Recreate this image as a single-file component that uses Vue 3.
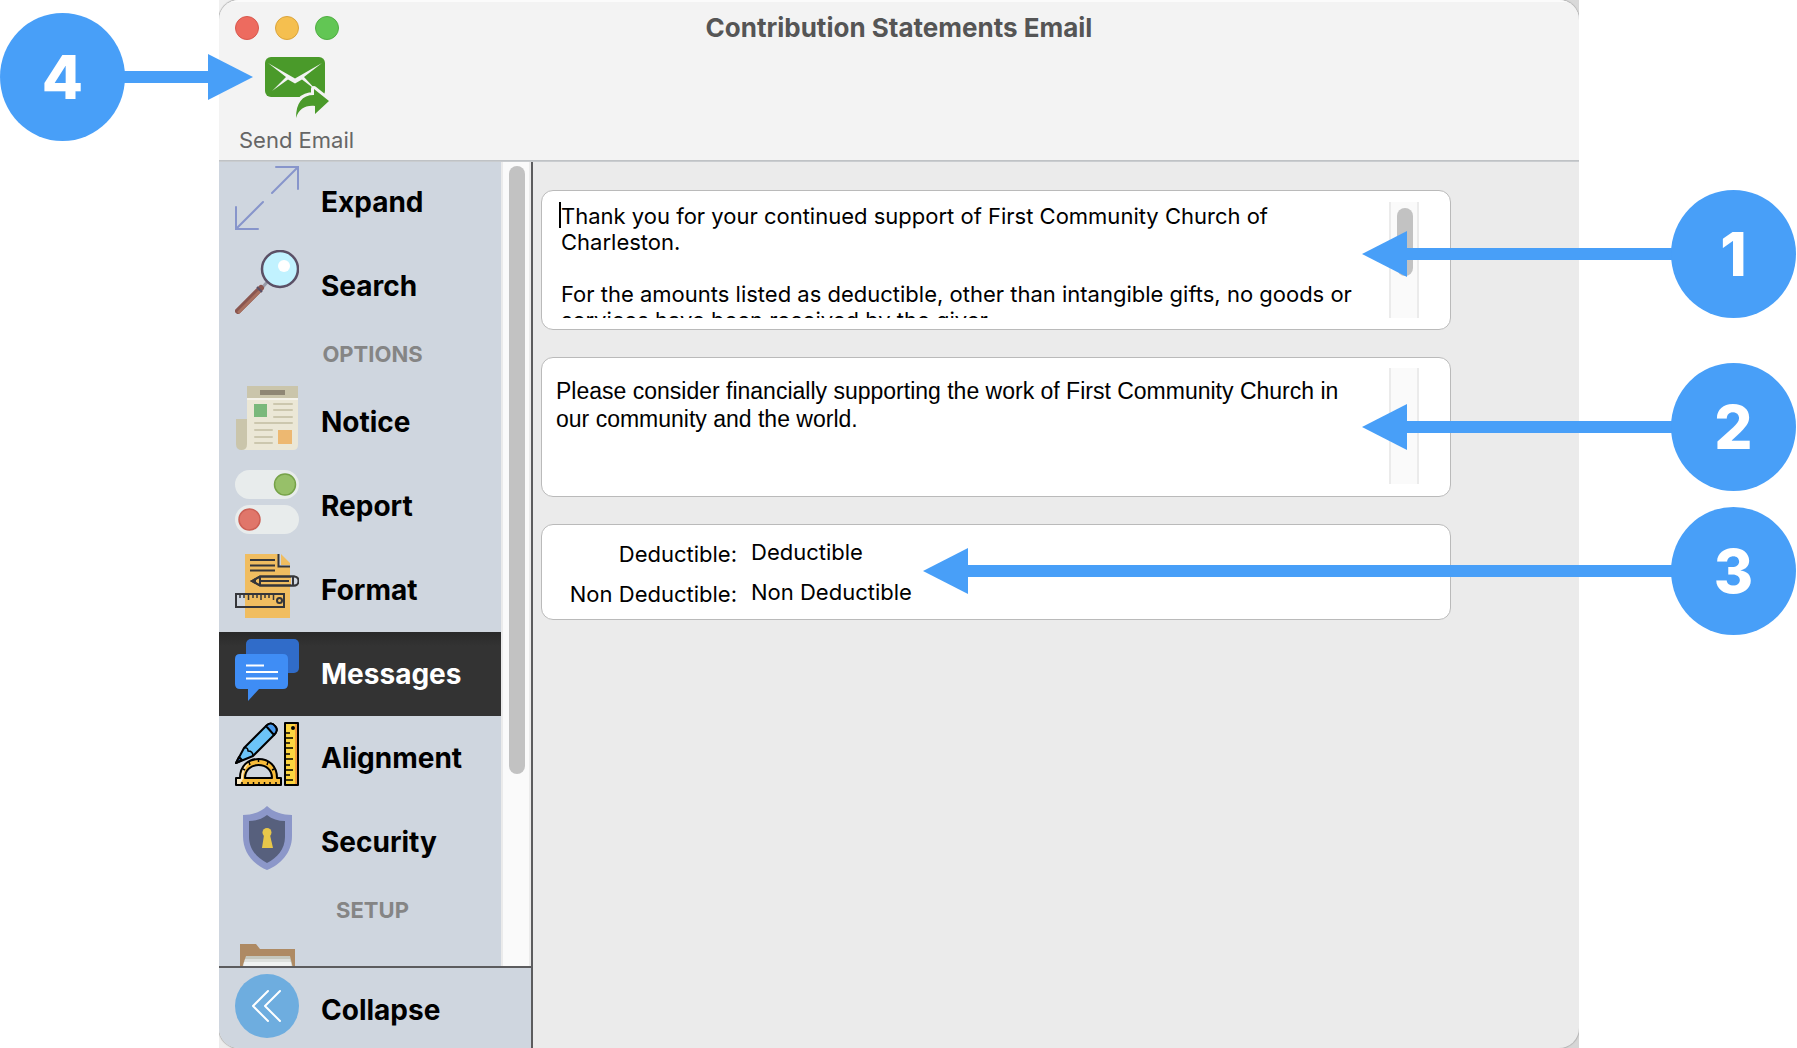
<script setup>
import { ref } from 'vue'

const active = ref('Messages')
const thankYou = ref(
  'Thank you for your continued support of First Community Church of Charleston.\n\nFor the amounts listed as deductible, other than intangible gifts, no goods or services have been received by the giver.'
)
const appeal = ref(
  'Please consider financially supporting the work of First Community Church in our community and the world.'
)
const deductible = ref('Deductible')
const nonDeductible = ref('Non Deductible')

const rows = [
  { label: 'Expand' },
  { label: 'Search' },
  { label: 'OPTIONS', section: true },
  { label: 'Notice' },
  { label: 'Report' },
  { label: 'Format' },
  { label: 'Messages' },
  { label: 'Alignment' },
  { label: 'Security' },
  { label: 'SETUP', section: true },
  { label: 'Folder', iconOnly: true },
]
</script>

<template>
  <div class="stage">
    <div class="backdrop">
      <div class="window">
        <header class="header">
          <div class="titlebar">
            <div class="lights">
              <button class="light red" type="button" aria-label="Close"></button>
              <button class="light yellow" type="button" aria-label="Minimize"></button>
              <button class="light green" type="button" aria-label="Zoom"></button>
            </div>
            <h1 class="title">Contribution Statements Email</h1>
          </div>
          <div class="toolbar">
            <button class="tool" type="button">
              <svg width="64" height="62" viewBox="0 0 64 62" aria-hidden="true">
                <rect width="60" height="40" rx="6" fill="#4a9a2a" />
                <path d="M3 6 21 20 7 34 23 22.500 30 26.500 37 22.500 52 34 39 20 57 6 30 21.500z" fill="#f3f3f3" />
                <path d="M31 61C31 46 37 38 49 38V32L64 44 50 57V49C40 48 34 52 31 61z" fill="#4a9a2a" stroke="#f3f3f3" stroke-width="6" stroke-linejoin="round" />
                <path d="M31 61C31 46 37 38 49 38V32L64 44 50 57V49C40 48 34 52 31 61z" fill="#4a9a2a" />
              </svg>
              <span>Send Email</span>
            </button>
          </div>
        </header>

        <div class="body">
          <aside class="sidebar">
            <div class="scroll-area">
              <nav class="list">
                <template v-for="row in rows" :key="row.label">
                  <h2 v-if="row.section" class="section">{{ row.label }}</h2>
                  <button
                    v-else
                    type="button"
                    class="row"
                    :class="{ active: active === row.label }"
                    :aria-label="row.label"
                    @click="active = row.label"
                  >
                    <svg class="icon" viewBox="0 0 64 64" aria-hidden="true">
                      <g v-if="row.label === 'Expand'" fill="none" stroke="#8795cb" stroke-width="2" stroke-linecap="round">
                        <path d="M41 1H63V23M63 1 37 27M1 41V63H23M1 63 28 36" />
                      </g>
                      <g v-else-if="row.label === 'Search'">
                        <path d="M27 38 33 31" stroke="#9a9ba8" stroke-width="3" />
                        <path d="M3 61 26 38" stroke="#8a564f" stroke-width="6" stroke-linecap="round" />
                        <path d="M4 62 24 42" stroke="#a8705f" stroke-width="3" stroke-linecap="round" />
                        <path d="M22 37 27 42" stroke="#5b5066" stroke-width="2" />
                        <circle cx="45" cy="19" r="18" fill="#c1f2ff" stroke="#5b5066" stroke-width="2.500" />
                        <circle cx="49" cy="16" r="6" fill="#fff" />
                      </g>
                      <g v-else-if="row.label === 'Notice'">
                        <path d="M1 33H13V58Q12 64 7 64 1 64 1 58z" fill="#cac5ab" />
                        <path d="M12 12H63V59Q63 64 58 64H7Q12 64 12 58z" fill="#ebe7d6" />
                        <path d="M12 0H63V12H12z" fill="#cac5ab" />
                        <path d="M12 12H63V14H12z" fill="#f5f3ea" />
                        <path d="M25 4H50V9H25z" fill="#8f8775" />
                        <path d="M19 18H32V31H19z" fill="#7ab87b" />
                        <path d="M43 44H57V58H43z" fill="#edb871" />
                        <path d="M39 18H57M39 24H57M39 31H57M20 37H57M20 44H37M20 51H37M20 57H37" stroke="#ccc7ae" stroke-width="2" stroke-linecap="round" />
                      </g>
                      <g v-else-if="row.label === 'Report'">
                        <rect width="64" height="29" rx="14.500" fill="#e8ecec" />
                        <rect y="35" width="64" height="29" rx="14.500" fill="#e8ecec" />
                        <circle cx="50" cy="14.500" r="10.500" fill="#97c069" stroke="#76a248" stroke-width="1.500" />
                        <circle cx="14.500" cy="49.500" r="10.500" fill="#e0766a" stroke="#cc6055" stroke-width="1.500" />
                      </g>
                      <g v-else-if="row.label === 'Format'" fill="none" stroke="#35363a" stroke-width="2">
                        <path d="M10 0H43V13H55V64H10zM46 0 55 9V11H46z" fill="#f0bd60" stroke="none" />
                        <path d="M43.500 0V12.500H55M15 6H40M15 11.500H40M15 16.500H40" />
                        <path d="M17 27 25 22.500H59A4.500 4.500 0 0 1 59 31.500H25z" fill="#f0bd60" />
                        <path d="M56 22.500H59A4.500 4.500 0 0 1 59 31.500H56z" fill="#cfd6df" stroke="none" />
                        <path d="M17 27 25 22.500H59A4.500 4.500 0 0 1 59 31.500H25zM25 22V32M58 22V32M25 27H54M20 26V28" />
                        <rect x="1" y="40" width="48" height="13" />
                        <path d="M5 40V44M9 40V44M13.500 40V46M18 40V44M22 40V44M26 40V46M30 40V44M34 40V44M38.500 40V46" stroke-width="1.500" />
                        <circle cx="44.500" cy="46.500" r="2.500" />
                      </g>
                      <g v-else-if="row.label === 'Messages'">
                        <rect x="11" y="1" width="53" height="34" rx="5" fill="#306cc9" />
                        <path d="M5 16H48Q53 16 53 21V46Q53 51 48 51H24L13 63V51H5Q0 51 0 46V21Q0 16 5 16z" fill="#3f8df5" />
                        <path d="M11 27.500H29M11 34H43M11 40.500H43" stroke="#fff" stroke-width="2" />
                      </g>
                      <g v-else-if="row.label === 'Alignment'" stroke="#000" stroke-width="2" stroke-linejoin="round">
                        <path d="M50 1H63V63H50z" fill="#fcd53f" />
                        <path d="M60 2H62V62H60z" fill="#f29b38" stroke="none" />
                        <path d="M50 11H55M50 16H58M50 21H55M50 26H58M50 32H55M50 37H58M50 43H55M50 48H58M50 53H55M50 58H58" stroke-width="1.500" />
                        <circle cx="58" cy="6" r="1" />
                        <path d="M1 63V56H5C5 44 13 37 23.500 37S42 44 42 56H46V63zM10 56H37C37 48 31 43 23.500 43S10 48 10 56z" fill="#f8bc3a" />
                        <path d="M2 62V57H6C6 50 9 43 14 41 9 47 8 52 8 57L5 62z" fill="#fff" stroke="none" opacity=".7" />
                        <path d="M7 63V60M13 63V60M18.500 63V60M24 63V60M29.500 63V60M35 63V60M41 63V60M23.500 37V40M14 40 15 43M33 40 32 43M8 47 10 48M39 47 37 48" stroke-width="1.500" />
                        <path d="M1 41 9 26 31 4Q36-1 40 4 44 8 39 13L18 34z" fill="#6cc4f8" />
                        <path d="M31 4Q36-1 40 4 44 8 39 13z" fill="#4a9bee" />
                        <path d="M1 41 4 35 7 38z" fill="#3370c4" />
                        <path d="M9 26Q13 25 13 29 18 29 18 34" fill="none" stroke-width="1.500" />
                      </g>
                      <g v-else-if="row.label === 'Security'">
                        <path d="M32 0C26 6 17 9 8 9V30C8 47 19 59 32 64 45 59 57 47 57 30V9C48 9 38 6 32 0z" fill="#8c97c9" />
                        <path d="M32 9C27 13 21 15 14 15V31C14 43 22 52 32 57 42 52 50 43 50 31V15C43 15 37 13 32 9z" fill="#57607d" />
                        <path d="M29 29H35L38 42H27z" fill="#e8c74a" />
                        <circle cx="32" cy="26.500" r="4.500" fill="#e8c74a" />
                      </g>
                      <g v-else>
                        <path d="M5 2H21L25 7H60V64H5z" fill="#ae8a63" />
                        <path d="M11 14H55L58 26V64H7V26z" fill="#c5c7bd" />
                        <path d="M10 17H55L57 26V64H8V26z" fill="#dde0dd" />
                        <path d="M9 20H56L57 26V64H8V26z" fill="#f0f2f1" />
                      </g>
                    </svg>
                    <span v-if="!row.iconOnly" class="row-label">{{ row.label }}</span>
                  </button>
                </template>
              </nav>
              <div class="track side-track"><div class="thumb side-thumb"></div></div>
            </div>
            <button type="button" class="row collapse">
              <svg class="icon" viewBox="0 0 64 64" aria-hidden="true">
                <circle cx="32" cy="32" r="32" fill="#6eaddf" />
                <path d="M33 17 18 32 33 47M45 17 30 32 45 47" fill="none" stroke="#fff" stroke-width="2" stroke-linecap="round" stroke-linejoin="round" />
              </svg>
              <span class="row-label">Collapse</span>
            </button>
          </aside>

          <main class="content">
            <section class="card message first">
              <span class="caret"></span>
              <textarea v-model="thankYou" class="text" aria-label="Statement message"></textarea>
              <div class="track"><div class="thumb"></div></div>
            </section>
            <section class="card message second">
              <textarea v-model="appeal" class="text" aria-label="Appeal message"></textarea>
              <div class="track"></div>
            </section>
            <section class="card fields">
              <div class="field">
                <label for="deductible">Deductible:</label>
                <input id="deductible" v-model="deductible" type="text" />
              </div>
              <div class="field">
                <label for="non-deductible">Non Deductible:</label>
                <input id="non-deductible" v-model="nonDeductible" type="text" />
              </div>
            </section>
          </main>
        </div>
      </div>
    </div>

    <div class="callout one"><i class="head"></i><i class="shaft"></i><b class="disc">1</b></div>
    <div class="callout two"><i class="head"></i><i class="shaft"></i><b class="disc">2</b></div>
    <div class="callout three"><i class="head"></i><i class="shaft"></i><b class="disc">3</b></div>
    <div class="callout four"><b class="disc">4</b><i class="shaft"></i><i class="head"></i></div>
  </div>
</template>

<style>
body {
  margin: 0;
  background: #fff;
}
</style>

<style scoped>
* {
  box-sizing: border-box;
}
button,
input,
textarea {
  margin: 0;
  padding: 0;
  border: 0;
  background: none;
  color: inherit;
  font: inherit;
}
.stage {
  position: relative;
  padding: 0 218px 0 219px;
  font-family: Inter, "Liberation Sans", sans-serif;
  color: #000;
}
.backdrop {
  overflow: hidden;
  background: linear-gradient(100deg, #f0f0f0, #d6d6d6);
}
.window {
  display: flex;
  flex-direction: column;
  height: 100vh;
  border-radius: 20px;
  overflow: hidden;
  background: #ebebeb;
  box-shadow: 0 0 1px 1px #b4b4b4;
}
.header {
  position: relative;
  z-index: 1;
  flex: none;
  height: 160px;
  background: #f3f3f3;
  box-shadow: 0 1px #bfc2c5, 0 2px #c9cccf, inset 0 2px #fbfbfb;
}
.titlebar {
  display: grid;
  grid-template-columns: 1fr auto 1fr;
  align-items: center;
  height: 56px;
  padding: 0 16px;
}
.lights {
  display: flex;
  gap: 16px;
}
.light {
  width: 24px;
  height: 24px;
  border-radius: 50%;
  border: 1px solid;
}
.red {
  background: #ed6b5f;
  border-color: #d8584d;
}
.yellow {
  background: #f5bf4f;
  border-color: #dba43a;
}
.green {
  background: #62c654;
  border-color: #4fae42;
}
.title {
  margin: 0;
  font-size: 26px;
  line-height: 32px;
  font-weight: 700;
  color: #555;
}
.toolbar {
  display: flex;
  padding: 1px 20px;
}
.tool {
  display: flex;
  flex-direction: column;
  align-items: center;
  gap: 8px;
  font-size: 22px;
  line-height: 26px;
  color: #666;
}
.body {
  flex: 1;
  display: flex;
  min-height: 0;
}
.sidebar {
  display: flex;
  flex-direction: column;
  flex: none;
  width: 314px;
  border-right: 2px solid #5c5c5e;
  background: #cfd6df;
}
.scroll-area {
  flex: 1;
  display: flex;
  min-height: 0;
}
.list {
  flex: 1;
  overflow-y: auto;
  scrollbar-width: none;
}
.row {
  display: flex;
  align-items: flex-start;
  gap: 22px;
  width: 100%;
  height: 84px;
  padding: 0 16px;
  font-size: 28px;
  line-height: 84px;
  font-weight: 700;
  text-align: left;
}
.row.active {
  background: linear-gradient(#292929, #333 14px);
  color: #fff;
}
.icon {
  flex: none;
  width: 64px;
  height: 64px;
  margin-top: 6px;
}
.section {
  margin: 0;
  padding-left: 25px;
  font-size: 22px;
  line-height: 52px;
  font-weight: 700;
  text-align: center;
  color: #858585;
}
.collapse {
  flex: none;
  height: 82px;
  border-top: 2px solid #5c5c5e;
}
.track {
  flex: none;
  width: 30px;
  padding: 6px 6px 0 8px;
  background: #fafafa;
  border: solid #ebebeb;
  border-width: 0 2px;
}
.track .thumb {
  width: 16px;
  height: 68px;
  margin-left: -2px;
  border-radius: 8px;
  background: #c2c2c2;
}
.track .side-thumb {
  height: 76%;
}
.content {
  flex: 1;
  display: flex;
  flex-direction: column;
  gap: 27px;
  min-width: 0;
  padding: 30px 128px 0 8px;
}
.card {
  border: 1px solid #bababa;
  border-radius: 12px;
  background: #fff;
}
.message {
  position: relative;
  display: flex;
  height: 140px;
  padding: 11px 31px 11px 19px;
}
.second {
  padding: 10px 31px 12px 14px;
}
.text {
  flex: 1;
  min-width: 0;
  resize: none;
  outline: none;
  overflow: hidden;
  scrollbar-width: none;
}
.first .text {
  padding: 1px 12px 0 0;
  font-size: 22px;
  line-height: 26px;
}
.second .text {
  padding: 9px 24px 0 0;
  font-family: "Liberation Sans", Arial, sans-serif;
  font-size: 23px;
  line-height: 28px;
}
.caret {
  position: absolute;
  left: 17px;
  top: 11px;
  width: 2px;
  height: 26px;
  background: #000;
}
.fields {
  display: flex;
  flex-direction: column;
  gap: 10px;
  padding: 12px 16px;
  font-size: 22px;
}
.field {
  display: flex;
  gap: 14px;
  height: 30px;
}
.field label {
  flex: none;
  width: 179px;
  line-height: 34px;
  text-align: right;
}
.field input {
  flex: 1;
  min-width: 0;
  height: 30px;
  outline: none;
}
.callout {
  position: absolute;
  right: 1px;
  z-index: 2;
  display: flex;
  align-items: center;
  width: 434px;
  height: 128px;
  pointer-events: none;
}
.one {
  top: 190px;
}
.two {
  top: 363px;
}
.three {
  top: 507px;
  width: 873px;
}
.four {
  top: 13px;
  right: auto;
  left: 0;
  width: 253px;
}
.disc {
  flex: none;
  width: 125px;
  height: 128px;
  border-radius: 50%;
  background: #489ff8;
  color: #fff;
  font-size: 60px;
  line-height: 128px;
  font-weight: 800;
  text-align: center;
}
.shaft {
  flex: 1;
  height: 12px;
  margin: 0 -1px;
  background: #489ff8;
}
.head {
  flex: none;
  width: 45px;
  height: 46px;
  background: #489ff8;
  clip-path: polygon(100% 0, 100% 100%, 0 50%);
}
.four .head {
  clip-path: polygon(0 0, 100% 50%, 0 100%);
}
</style>
